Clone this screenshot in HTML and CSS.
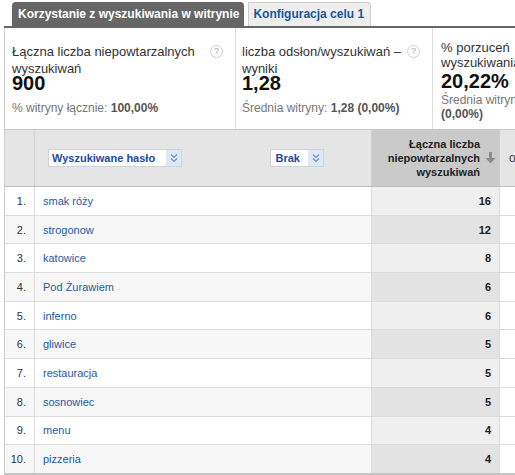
FILE: index.html
```html
<!DOCTYPE html>
<html lang="pl">
<head>
<meta charset="utf-8">
<title>Wyszukiwanie w witrynie</title>
<link rel="stylesheet" href="styles.css">
</head>
<body>
<div class="page">
  <div class="tabs">
    <div class="tab tab-active">Korzystanie z wyszukiwania w witrynie</div>
    <div class="tab tab-link">Konfiguracja celu 1</div>
  </div>

  <div class="metrics">
    <div class="metric m1">
      <div class="metric-head">
        <div class="metric-label">Łączna liczba niepowtarzalnych wyszukiwań</div>
        <span class="help">?</span>
      </div>
      <div class="metric-value">900</div>
      <div class="metric-sub">% witryny łącznie: <b>100,00%</b></div>
    </div>
    <div class="metric m2">
      <div class="metric-head">
        <div class="metric-label">liczba odsłon/wyszukiwań – wyniki</div>
        <span class="help">?</span>
      </div>
      <div class="metric-value">1,28</div>
      <div class="metric-sub">Średnia witryny: <b>1,28 (0,00%)</b></div>
    </div>
    <div class="metric m3">
      <div class="metric-head">
        <div class="metric-label">% porzuceń wyszukiwania</div>
        <span class="help">?</span>
      </div>
      <div class="metric-value">20,22%</div>
      <div class="metric-sub">Średnia witryny: <b>20,22% (0,00%)</b></div>
    </div>
  </div>

  <div class="grid">
    <div class="row head">
      <div class="cell c-num"></div>
      <div class="cell c-term">
        <div class="dd"><span class="dd-text dd-wide">Wyszukiwane hasło</span><span class="dd-btn"><svg width="8" height="10" viewBox="0 0 8 10"><path d="M1 1.5 L4 4.5 L7 1.5 M1 5.5 L4 8.5 L7 5.5" fill="none" stroke="#6a8cc6" stroke-width="1.2"/></svg></span></div>
        <div class="dd"><span class="dd-text dd-short">Brak</span><span class="dd-btn"><svg width="8" height="10" viewBox="0 0 8 10"><path d="M1 1.5 L4 4.5 L7 1.5 M1 5.5 L4 8.5 L7 5.5" fill="none" stroke="#6a8cc6" stroke-width="1.2"/></svg></span></div>
      </div>
      <div class="cell c-val sorted">
        <div class="sort-text">Łączna liczba<br>niepowtarzalnych<br>wyszukiwań</div>
        <svg class="sort-arrow" width="11" height="12" viewBox="0 0 11 12"><path d="M4 0 H7 V6 H10.5 L5.5 11.5 L0.5 6 H4 Z" fill="#8c8c8c"/></svg>
      </div>
      <div class="cell c-next">odsłony</div>
    </div>

    <div class="row"><div class="cell c-num">1.</div><div class="cell c-term"><a>smak róży</a></div><div class="cell c-val">16</div><div class="cell c-next"></div></div>
    <div class="row"><div class="cell c-num">2.</div><div class="cell c-term"><a>strogonow</a></div><div class="cell c-val">12</div><div class="cell c-next"></div></div>
    <div class="row"><div class="cell c-num">3.</div><div class="cell c-term"><a>katowice</a></div><div class="cell c-val">8</div><div class="cell c-next"></div></div>
    <div class="row"><div class="cell c-num">4.</div><div class="cell c-term"><a>Pod Żurawiem</a></div><div class="cell c-val">6</div><div class="cell c-next"></div></div>
    <div class="row"><div class="cell c-num">5.</div><div class="cell c-term"><a>inferno</a></div><div class="cell c-val">6</div><div class="cell c-next"></div></div>
    <div class="row"><div class="cell c-num">6.</div><div class="cell c-term"><a>gliwice</a></div><div class="cell c-val">5</div><div class="cell c-next"></div></div>
    <div class="row"><div class="cell c-num">7.</div><div class="cell c-term"><a>restauracja</a></div><div class="cell c-val">5</div><div class="cell c-next"></div></div>
    <div class="row"><div class="cell c-num">8.</div><div class="cell c-term"><a>sosnowiec</a></div><div class="cell c-val">5</div><div class="cell c-next"></div></div>
    <div class="row"><div class="cell c-num">9.</div><div class="cell c-term"><a>menu</a></div><div class="cell c-val">4</div><div class="cell c-next"></div></div>
    <div class="row last"><div class="cell c-num">10.</div><div class="cell c-term"><a>pizzeria</a></div><div class="cell c-val">4</div><div class="cell c-next"></div></div>
  </div>
</div>
</body>
</html>
```

FILE: styles.css
```css
html, body {
  margin: 0;
  padding: 0;
  background: #fff;
  overflow: hidden;
}
body {
  font-family: "Liberation Sans", Arial, sans-serif;
  color: #333;
}
.page {
  margin-left: 4px;
  width: 620px;
  padding-top: 2px;
}

/* Tabs */
.tabs {
  display: flex;
  gap: 4px;
  padding-left: 8px;
  height: 24px;
  border-bottom: 2px solid #666;
}
.tab {
  box-sizing: border-box;
  height: 24px;
  font-size: 12px;
  font-weight: bold;
  line-height: 24px;
  white-space: nowrap;
}
.tab-active {
  background: #666;
  color: #fff;
  padding: 0 5px 0 6px;
  border-radius: 4px 4px 0 0;
}
.tab-link {
  background: #eee;
  color: #1b5697;
  border: 1px solid #ccc;
  border-bottom: none;
  border-radius: 0 4px 0 0;
  padding: 0 6px 0 4px;
  line-height: 23px;
}

/* Metrics */
.metrics {
  display: flex;
  height: 101px;
  border-left: 1px solid #ccc;
}
.metric {
  box-sizing: border-box;
  border-right: 1px solid #ddd;
  padding: 15px 10px 0 7px;
  flex: none;
}
.m1 { width: 231px; }
.m2 { width: 197px; padding-left: 6px; }
.m3 { width: 170px; padding-left: 8px; padding-top: 13px; }
.metric-head {
  display: flex;
  align-items: flex-start;
}
.metric-label {
  flex: 1;
  font-size: 13px;
  line-height: 17px;
  color: #333;
}
.help {
  box-sizing: border-box;
  width: 13px;
  height: 13px;
  margin-top: 2px;
  margin-right: 2px;
  border: 1px solid #cfcfcf;
  border-radius: 50%;
  font-size: 9px;
  line-height: 11px;
  text-align: center;
  color: #aaa;
  flex: none;
}
.metric-value {
  font-size: 20px;
  font-weight: bold;
  line-height: 12px;
  margin-top: 0;
  color: #111;
}
.metric-sub {
  font-size: 12px;
  line-height: 14px;
  margin-top: 12px;
  color: #777;
}
.metric-sub b {
  color: #555;
}
.m3 .metric-label {
  line-height: 14.5px;
}
.m3 .metric-value {
  margin-top: 5px;
}
.m3 .metric-sub {
  margin-top: 6px;
}

/* Grid */
.grid {
  border-left: 1px solid #ccc;
  border-top: 1px solid #c8c8c8;
  border-bottom: 2px solid #c4c4c4;
  font-size: 11px;
}
.row {
  display: grid;
  grid-template-columns: 30px 337px 128px 1fr;
  height: 28.7px;
  box-sizing: border-box;
  border-bottom: 1px solid #ddd;
}
.row.last {
  border-bottom: none;
  height: 27.7px;
}
.cell {
  box-sizing: border-box;
  border-right: 1px solid #ddd;
  display: flex;
  align-items: center;
  background: #fff;
}
.c-num {
  justify-content: flex-end;
  padding-right: 8px;
  color: #333;
}
.c-term {
  padding-left: 8px;
}
.c-term a {
  color: #1f5b9b;
}
.c-val {
  justify-content: flex-end;
  padding-right: 8px;
  font-weight: bold;
  color: #222;
  background: #efefef;
}
.c-next {
  border-right: none;
}
.row:nth-child(odd) .c-num,
.row:nth-child(odd) .c-term {
  background: #f7f7f7;
}
.row:nth-child(odd) .c-val {
  background: #e3e3e3;
}

/* Header row */
.row.head {
  height: 57px;
  border-bottom: 1px solid #bdbdbd;
}
.row.head .cell {
  background: #e5e5e5;
  border-right-color: #cfcfcf;
}
.row.head .c-term {
  justify-content: space-between;
  padding: 0 47px 0 13px;
}
.row.head .c-val.sorted {
  background: #cacaca;
  padding-right: 3px;
  gap: 5px;
}
.row.head .c-next {
  padding-left: 9px;
  color: #444;
  font-size: 12px;
  white-space: nowrap;
}
.dd {
  display: flex;
  height: 18px;
  box-sizing: border-box;
  border: 1px solid #cfd3d8;
  background: #fff;
}
.dd-text {
  font-weight: bold;
  color: #1d4c9a;
  line-height: 16px;
}
.dd-wide {
  padding: 0 11px 0 3px;
}
.dd-short {
  padding: 0 8px 0 5px;
}
.dd-btn {
  width: 15px;
  background: #dde9f6;
  display: flex;
  align-items: center;
  justify-content: center;
}
.sort-text {
  text-align: right;
  font-weight: bold;
  line-height: 14px;
  color: #222;
}
.sort-arrow {
  flex: none;
}
```
